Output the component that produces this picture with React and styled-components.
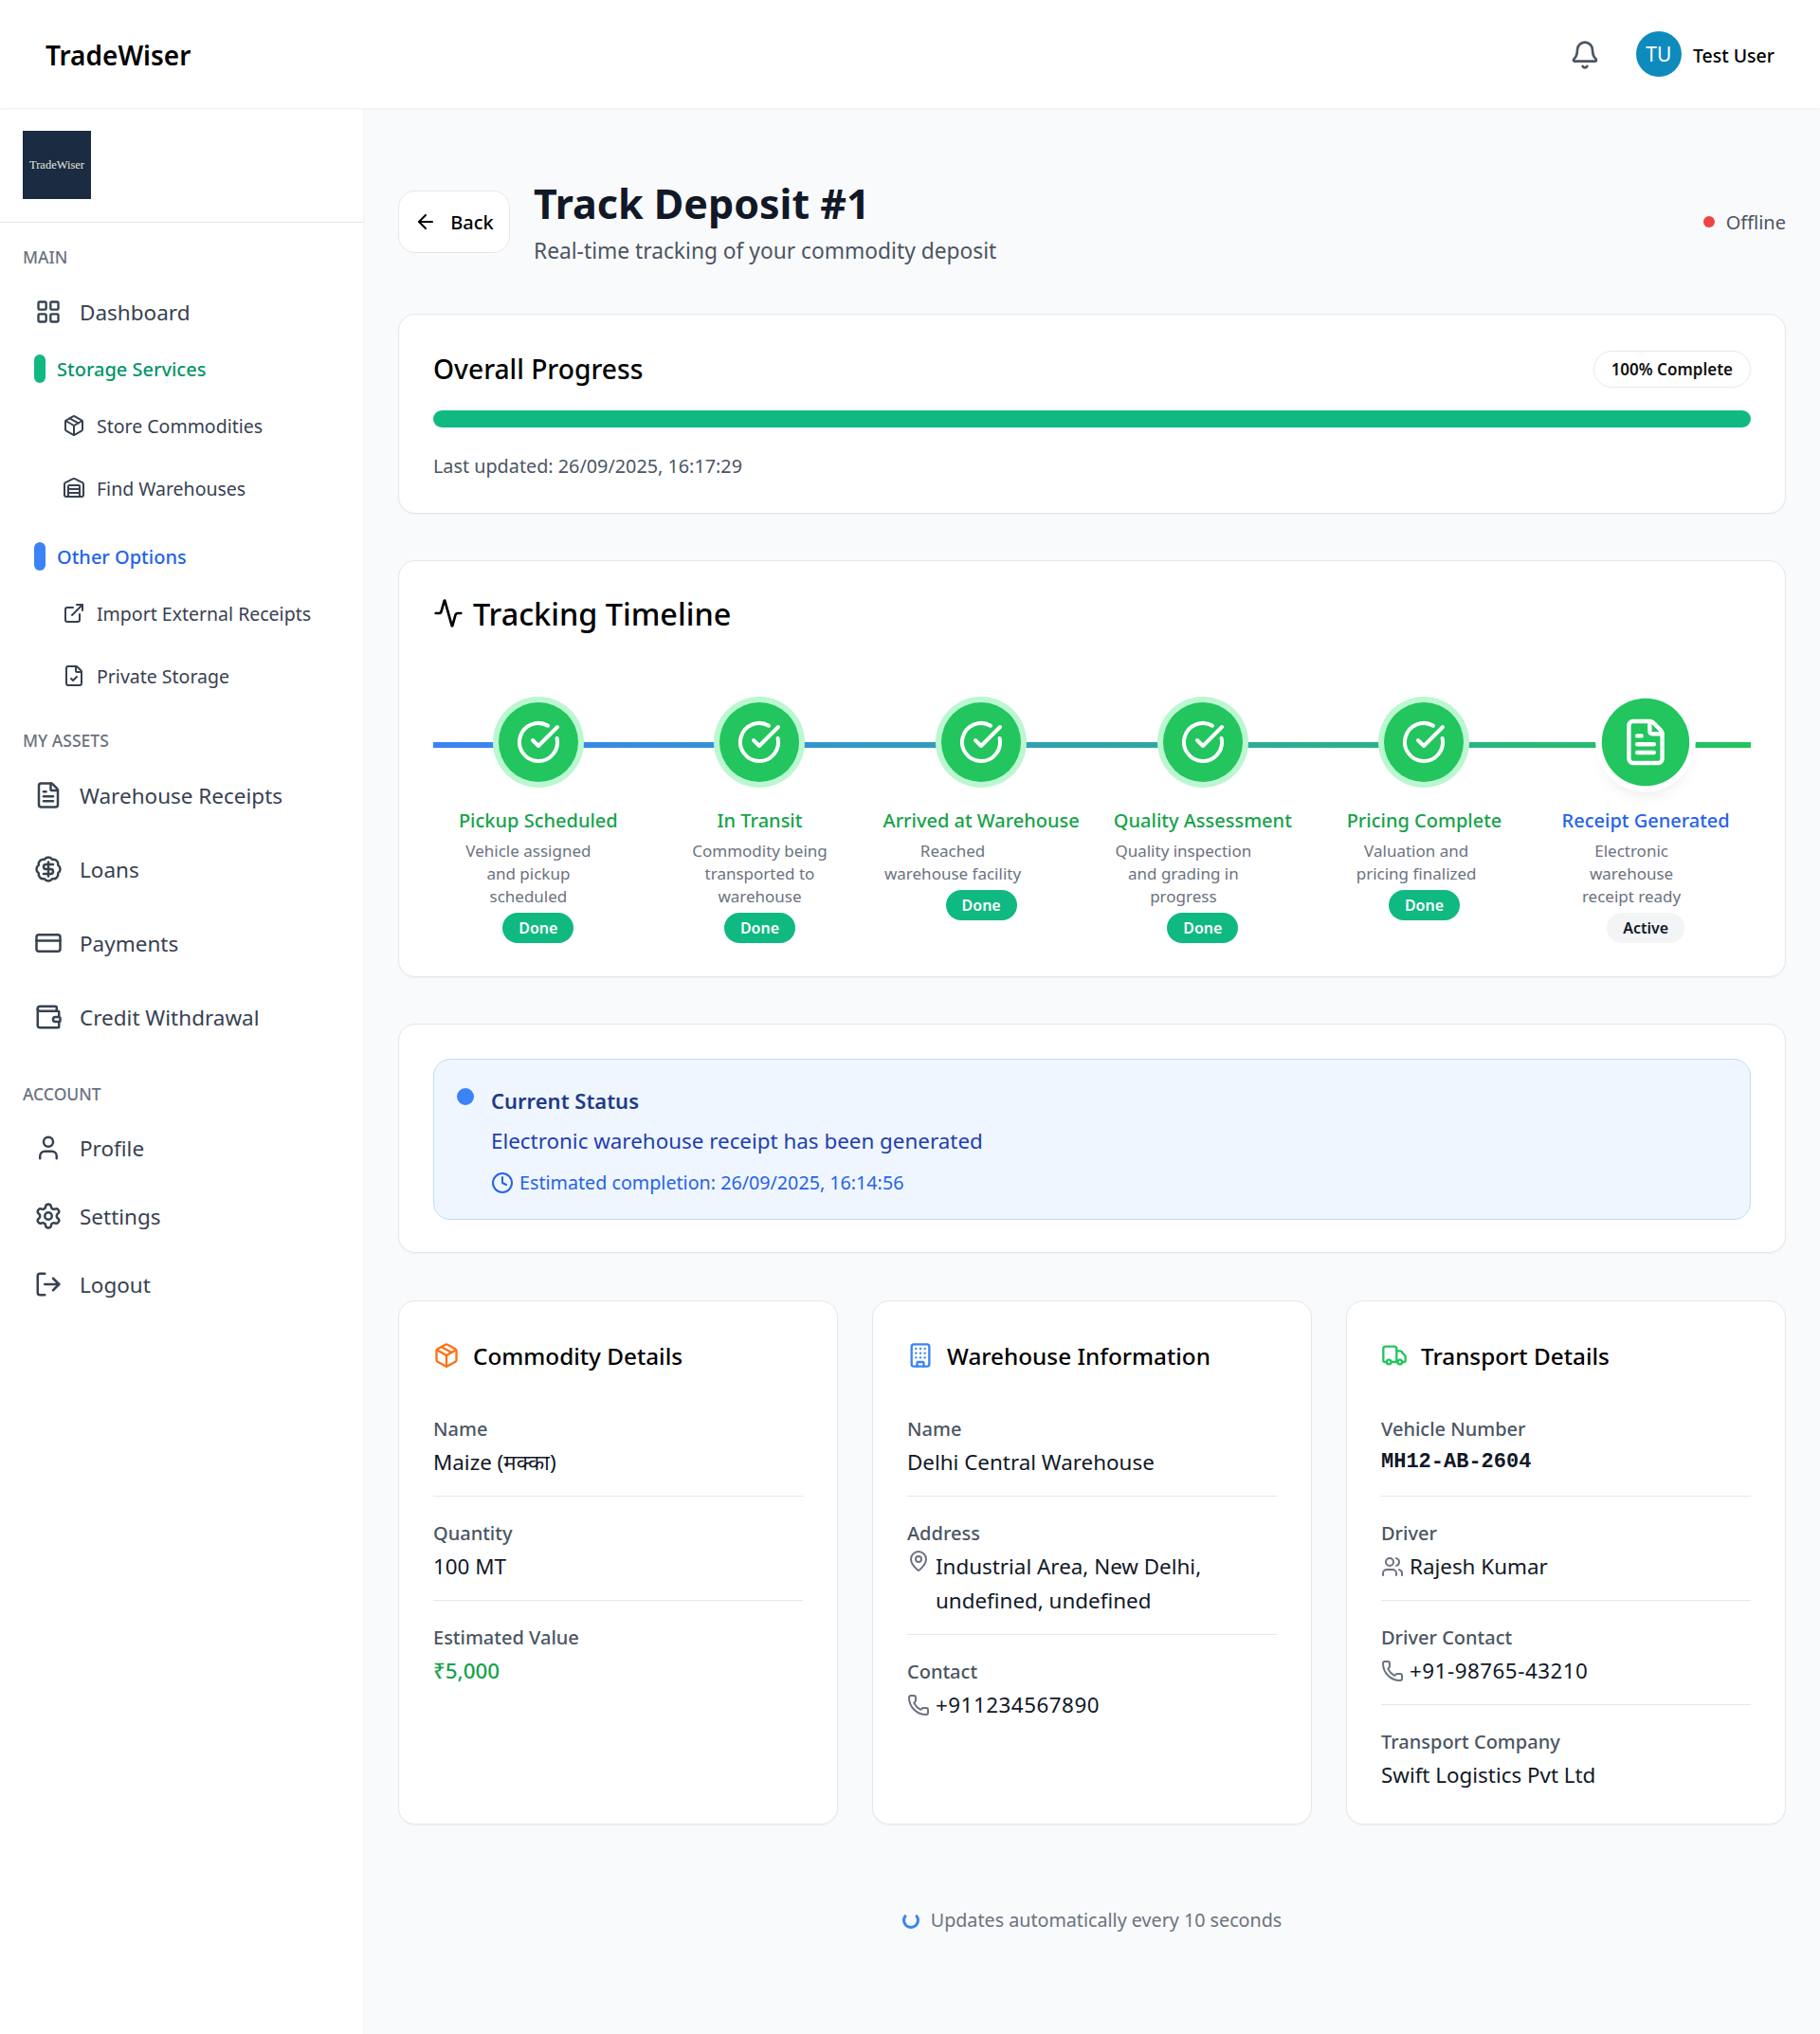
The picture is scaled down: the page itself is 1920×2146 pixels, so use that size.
import React from "react";
import styled, { createGlobalStyle } from "styled-components";
import {
  Activity, ArrowLeft, BadgeDollarSign, Bell, Building, CircleCheckBig, Clock, CreditCard, ExternalLink,
  FileCheck, FileText, LayoutGrid, LogOut, MapPin, Package, Phone, Settings, Truck, User, Users, Wallet, Warehouse,
} from "lucide-react";

const GlobalStyle = createGlobalStyle`
  * { box-sizing: border-box; }
  body {
    margin: 0;
    background: #f9fafb;
    color: #111827;
    font-family: "Noto Sans", "Open Sans", sans-serif;
  }
  svg { flex-shrink: 0; }
`;

const Page = styled.div`
  min-height: 2146px;
  display: flex;
  flex-direction: column;
`;

const TopBar = styled.header`
  height: 114px;
  flex: none;
  background: #fff;
  display: flex;
  align-items: center;
  justify-content: space-between;
  padding: 2px 48px 0;
  box-shadow: 0 1px 2px rgba(0, 0, 0, 0.06);
  position: relative;
`;

const Brand = styled.div`
  font-size: 28px;
  font-weight: 600;
  color: #000;
`;

const UserArea = styled.div`
  display: flex;
  align-items: center;
  color: #4b5563;
`;

const Avatar = styled.div`
  width: 48px;
  height: 48px;
  margin: -2px 12px 0 38px;
  border-radius: 50%;
  background: #0e8bbd;
  color: #fff;
  font-size: 21px;
  display: flex;
  align-items: center;
  justify-content: center;
`;

const UserName = styled.span`
  font-size: 19.5px;
  font-weight: 500;
  color: #000;
`;

const Body = styled.div`
  flex: 1;
  display: flex;
`;

const Sidebar = styled.aside`
  width: 384px;
  flex: none;
  background: #fff;
  border-right: 1px solid #f3f4f6;
`;

const LogoWrap = styled.div`
  padding: 24px 24px;
  height: 121px;
  border-bottom: 1px solid #e5e7eb;
`;

const LogoBox = styled.div`
  width: 72px;
  height: 72px;
  background: #1a2b42;
  color: #e9e6df;
  font-family: "Liberation Serif", serif;
  font-size: 12.5px;
  display: flex;
  align-items: center;
  justify-content: center;
`;

const Nav = styled.nav`
  padding-top: 24px;
`;

const SectionLabel = styled.div`
  height: 24px;
  line-height: 24px;
  padding-left: 24px;
  font-size: 17.5px;
  font-weight: 500;
  color: #6b7280;
  text-transform: uppercase;
  margin-top: ${(p) => p.$top || 0}px;
  margin-bottom: ${(p) => p.$bottom || 0}px;
`;

const NavRow = styled.div`
  height: ${(p) => p.$h}px;
  display: flex;
  align-items: center;
  padding-left: 36px;
  gap: 18px;
  font-size: 22.5px;
  color: #374151;
  margin-bottom: ${(p) => p.$bottom || 0}px;
`;

const IconSlot = styled.span`
  width: 30px;
  display: flex;
  justify-content: center;
  align-items: center;
  flex: none;
`;

const GroupHead = styled.div`
  height: 54px;
  display: flex;
  align-items: center;
  gap: 12px;
  padding-left: 36px;
  margin-top: ${(p) => p.$top || 0}px;
  font-size: 20px;
  font-weight: 500;
  color: ${(p) => p.$text};
`;

const GroupPill = styled.span`
  width: 12px;
  height: 30px;
  border-radius: 6px;
  background: ${(p) => p.$color};
`;

const SubRow = styled.div`
  height: 66px;
  display: flex;
  align-items: center;
  gap: 12px;
  padding-left: 66px;
  font-size: 19.5px;
  color: #374151;
`;

const Main = styled.main`
  flex: 1;
  min-width: 0;
  padding: 71px 36px 0;
`;

const PageHead = styled.div`
  display: flex;
  align-items: center;
  justify-content: space-between;
  margin-bottom: 48px;
`;

const HeadLeft = styled.div`
  display: flex;
  align-items: center;
  gap: 25px;
`;

const BackButton = styled.button`
  width: 118px;
  height: 66px;
  border: 1px solid #e5e7eb;
  border-radius: 18px;
  background: #fff;
  display: flex;
  align-items: center;
  justify-content: center;
  gap: 14px;
  font-family: inherit;
  font-size: 20px;
  font-weight: 500;
  color: #000;
  padding: 0;
`;

const Title = styled.h1`
  margin: 0;
  font-size: 43px;
  line-height: 60px;
  font-weight: 700;
  color: #111827;
`;

const Subtitle = styled.p`
  margin: 2px 0 0;
  font-size: 22.75px;
  line-height: 36px;
  color: #4b5563;
`;

const OfflineTag = styled.div`
  display: flex;
  align-items: center;
  gap: 12px;
  font-size: 20px;
  color: #4b5563;
`;

const OfflineDot = styled.span`
  width: 12px;
  height: 12px;
  border-radius: 50%;
  background: #ef4444;
`;

const Card = styled.section`
  background: #fff;
  border: 1px solid #e5e7eb;
  border-radius: 18px;
  box-shadow: 0 1px 2px rgba(0, 0, 0, 0.04);
  padding: 36px 36px ${(p) => p.$pb || 36}px;
  margin-bottom: ${(p) => p.$mb || 50}px;
`;

const ProgressHead = styled.div`
  height: 42px;
  display: flex;
  align-items: center;
  justify-content: space-between;
`;

const CardHeading = styled.h2`
  margin: 0;
  font-size: 28.2px;
  font-weight: 500;
  color: #000;
`;

const CompleteBadge = styled.span`
  height: 39px;
  padding: 0 18px;
  border: 1px solid #e5e7eb;
  border-radius: 20px;
  display: flex;
  align-items: center;
  font-size: 17px;
  font-weight: 600;
  color: #111;
`;

const ProgressTrack = styled.div`
  height: 18px;
  margin-top: 23px;
  border-radius: 9px;
  background: #10b981;
`;

const UpdatedText = styled.p`
  margin: 29px 0 0;
  font-size: 19.8px;
  line-height: 24px;
  color: #4b5563;
`;

const TimelineHeading = styled.h2`
  margin: 0 0 69px;
  height: 38px;
  display: flex;
  align-items: center;
  gap: 10px;
  font-size: 32.4px;
  font-weight: 500;
  color: #000;
`;

const Steps = styled.div`
  position: relative;
  display: grid;
  grid-template-columns: repeat(6, 1fr);
  gap: 12px;
`;

const StepLine = styled.div`
  position: absolute;
  left: 0;
  right: 0;
  top: 48px;
  height: 6px;
  background: linear-gradient(to right, #3b82f6, #22c55e);
`;

const Step = styled.div`
  position: relative;
  display: flex;
  flex-direction: column;
  align-items: center;
`;

const StepCircle = styled.div`
  width: 84px;
  height: 84px;
  margin: 6px 0;
  border-radius: 50%;
  background: #22c55e;
  color: #fff;
  display: flex;
  align-items: center;
  justify-content: center;
  box-shadow: 0 0 0 6px #bbf7d0;

  ${(p) =>
    p.$active &&
    `
    transform: scale(1.1);
    box-shadow: 0 0 0 6px #fff, 0 10px 15px -3px rgba(0, 0, 0, 0.1), 0 4px 6px -4px rgba(0, 0, 0, 0.1);
  `}
`;

const StepText = styled.div`
  margin-top: 20px;
  text-align: center;
`;

const StepTitle = styled.div`
  font-size: 20px;
  line-height: 30px;
  font-weight: 500;
  white-space: nowrap;
  color: ${(p) => (p.$active ? "#2563eb" : "#16a34a")};
`;

const StepDesc = styled.div`
  max-width: 147px;
  margin-top: 5px;
  font-size: 17px;
  line-height: 24px;
  color: #6b7280;
`;

const StepBadge = styled.span`
  height: 32px;
  margin-top: 5px;
  padding: 0 17px;
  border-radius: 16px;
  display: flex;
  align-items: center;
  font-size: 16px;
  font-weight: 600;
  background: ${(p) => (p.$active ? "#f3f4f6" : "#10b981")};
  color: ${(p) => (p.$active ? "#111827" : "#fff")};
`;

const StatusBox = styled.div`
  display: flex;
  gap: 18px;
  padding: 25px 24px 24px;
  background: #eff6ff;
  border: 1px solid #bfdbfe;
  border-radius: 18px;
`;

const StatusDot = styled.span`
  width: 18px;
  height: 18px;
  margin-top: 5px;
  border-radius: 50%;
  background: #3b82f6;
  flex: none;
`;

const StatusTitle = styled.div`
  font-size: 22px;
  line-height: 36px;
  font-weight: 600;
  color: #1e3a8a;
`;

const StatusMessage = styled.div`
  margin-top: 7px;
  font-size: 22.4px;
  line-height: 36px;
  color: #1e40af;
`;

const StatusEta = styled.div`
  margin-top: 12px;
  display: flex;
  align-items: center;
  gap: 6px;
  font-size: 19.7px;
  line-height: 28px;
  color: #2563eb;
`;

const DetailGrid = styled.div`
  display: grid;
  grid-template-columns: repeat(3, 1fr);
  gap: 36px;
`;

const DetailCard = styled(Card)`
  height: 553px;
  margin: 0;
`;

const DetailHeading = styled.h3`
  margin: 0 0 43px;
  height: 42px;
  display: flex;
  align-items: center;
  gap: 14px;
  font-size: 24.3px;
  font-weight: 500;
  color: #000;
`;

const DetailRow = styled.div`
  & + & {
    margin-top: 25px;
  }
  &:not(:last-child) {
    padding-bottom: 17px;
    border-bottom: 1px solid #e5e7eb;
  }
`;

const DetailLabel = styled.div`
  font-size: 20px;
  line-height: 28px;
  font-weight: 500;
  color: #4b5563;
`;

const DetailValue = styled.div`
  margin-top: 3px;
  display: flex;
  align-items: ${(p) => (p.$top ? "flex-start" : "center")};
  gap: 6px;
  font-size: ${(p) => (p.$mono ? 22 : 22.4)}px;
  line-height: 36px;
  letter-spacing: ${(p) => (p.$phone ? "0.5px" : "normal")};
  color: ${(p) => p.$color || "#111827"};
  font-weight: ${(p) => p.$weight || 400};
  font-family: ${(p) => (p.$mono ? '"Liberation Mono", monospace' : "inherit")};
`;

const FootNote = styled.div`
  margin-top: 87px;
  display: flex;
  align-items: center;
  justify-content: center;
  gap: 12px;
  font-size: 19.7px;
  line-height: 28px;
  color: #6b7280;
`;

const Spinner = styled.span`
  width: 18px;
  height: 18px;
  border-radius: 50%;
  border: 3px solid #3b82f6;
  border-top-color: transparent;
`;

const steps = [
  { title: "Pickup Scheduled", desc: "Vehicle assigned and pickup scheduled" },
  { title: "In Transit", desc: "Commodity being transported to warehouse" },
  { title: "Arrived at Warehouse", desc: "Reached warehouse facility" },
  { title: "Quality Assessment", desc: "Quality inspection and grading in progress" },
  { title: "Pricing Complete", desc: "Valuation and pricing finalized" },
  { title: "Receipt Generated", desc: "Electronic warehouse receipt ready", active: true },
];

const storage = [
  { icon: Package, label: "Store Commodities" },
  { icon: Warehouse, label: "Find Warehouses" },
];

const other = [
  { icon: ExternalLink, label: "Import External Receipts" },
  { icon: FileCheck, label: "Private Storage" },
];

const assets = [
  { icon: FileText, label: "Warehouse Receipts" },
  { icon: BadgeDollarSign, label: "Loans" },
  { icon: CreditCard, label: "Payments" },
  { icon: Wallet, label: "Credit Withdrawal" },
];

const account = [
  { icon: User, label: "Profile" },
  { icon: Settings, label: "Settings" },
  { icon: LogOut, label: "Logout" },
];

export default function App() {
  return (
    <Page>
      <GlobalStyle />
      <TopBar>
        <Brand>TradeWiser</Brand>
        <UserArea>
          <Bell size={32} />
          <Avatar>TU</Avatar>
          <UserName>Test User</UserName>
        </UserArea>
      </TopBar>
      <Body>
        <Sidebar>
          <LogoWrap>
            <LogoBox>TradeWiser</LogoBox>
          </LogoWrap>
          <Nav>
            <SectionLabel $bottom={16}>Main</SectionLabel>
            <NavRow $h={60} $bottom={3}>
              <IconSlot><LayoutGrid size={28} /></IconSlot>
              Dashboard
            </NavRow>
            <GroupHead $text="#059669">
              <GroupPill $color="#10b981" />
              Storage Services
            </GroupHead>
            {storage.map((item) => (
              <SubRow key={item.label}><item.icon size={24} />{item.label}</SubRow>
            ))}
            <GroupHead $text="#2563eb" $top={12}>
              <GroupPill $color="#3b82f6" />
              Other Options
            </GroupHead>
            {other.map((item) => (
              <SubRow key={item.label}><item.icon size={24} />{item.label}</SubRow>
            ))}

            <SectionLabel $top={23} $bottom={7}>My Assets</SectionLabel>
            {assets.map((item) => (
              <NavRow $h={78} key={item.label}>
                <IconSlot><item.icon size={30} /></IconSlot>
                {item.label}
              </NavRow>
            ))}

            <SectionLabel $top={30} $bottom={9}>Account</SectionLabel>
            {account.map((item) => (
              <NavRow $h={72} key={item.label}>
                <IconSlot><item.icon size={30} /></IconSlot>
                {item.label}
              </NavRow>
            ))}
          </Nav>
        </Sidebar>

        <Main>
          <PageHead>
            <HeadLeft>
              <BackButton><ArrowLeft size={24} />Back</BackButton>
              <div>
                <Title>Track Deposit #1</Title>
                <Subtitle>Real-time tracking of your commodity deposit</Subtitle>
              </div>
            </HeadLeft>
            <OfflineTag><OfflineDot />Offline</OfflineTag>
          </PageHead>

          <Card $pb={37} $mb={49}>
            <ProgressHead>
              <CardHeading>Overall Progress</CardHeading>
              <CompleteBadge>100% Complete</CompleteBadge>
            </ProgressHead>
            <ProgressTrack />
            <UpdatedText>Last updated: 26/09/2025, 16:17:29</UpdatedText>
          </Card>

          <Card $pb={35} $mb={49}>
            <TimelineHeading><Activity size={32} />Tracking Timeline</TimelineHeading>
            <Steps>
              <StepLine />
              {steps.map((s) => (
                <Step key={s.title}>
                  <StepCircle $active={s.active}>
                    {s.active ? <FileText size={48} /> : <CircleCheckBig size={48} />}
                  </StepCircle>
                  <StepText>
                    <StepTitle $active={s.active}>{s.title}</StepTitle>
                    <StepDesc>{s.desc}</StepDesc>
                  </StepText>
                  <StepBadge $active={s.active}>{s.active ? "Active" : "Done"}</StepBadge>
                </Step>
              ))}
            </Steps>
          </Card>

          <Card $pb={34}>
            <StatusBox>
              <StatusDot />
              <div>
                <StatusTitle>Current Status</StatusTitle>
                <StatusMessage>Electronic warehouse receipt has been generated</StatusMessage>
                <StatusEta><Clock size={24} />Estimated completion: 26/09/2025, 16:14:56</StatusEta>
              </div>
            </StatusBox>
          </Card>

          <DetailGrid>
            <DetailCard>
              <DetailHeading><Package size={28} color="#f97316" />Commodity Details</DetailHeading>
              <DetailRow>
                <DetailLabel>Name</DetailLabel>
                <DetailValue>Maize (मक्का)</DetailValue>
              </DetailRow>
              <DetailRow>
                <DetailLabel>Quantity</DetailLabel>
                <DetailValue>100 MT</DetailValue>
              </DetailRow>
              <DetailRow>
                <DetailLabel>Estimated Value</DetailLabel>
                <DetailValue $color="#16a34a" $weight={500}>₹5,000</DetailValue>
              </DetailRow>
            </DetailCard>

            <DetailCard>
              <DetailHeading><Building size={28} color="#3b82f6" />Warehouse Information</DetailHeading>
              <DetailRow>
                <DetailLabel>Name</DetailLabel>
                <DetailValue>Delhi Central Warehouse</DetailValue>
              </DetailRow>
              <DetailRow>
                <DetailLabel>Address</DetailLabel>
                <DetailValue $top>
                  <MapPin size={24} color="#6b7280" />
                  <span>Industrial Area, New Delhi, undefined, undefined</span>
                </DetailValue>
              </DetailRow>
              <DetailRow>
                <DetailLabel>Contact</DetailLabel>
                <DetailValue $phone><Phone size={24} color="#6b7280" />+911234567890</DetailValue>
              </DetailRow>
            </DetailCard>

            <DetailCard>
              <DetailHeading><Truck size={28} color="#22c55e" />Transport Details</DetailHeading>
              <DetailRow>
                <DetailLabel>Vehicle Number</DetailLabel>
                <DetailValue $mono $weight={700}>MH12-AB-2604</DetailValue>
              </DetailRow>
              <DetailRow>
                <DetailLabel>Driver</DetailLabel>
                <DetailValue><Users size={24} color="#6b7280" />Rajesh Kumar</DetailValue>
              </DetailRow>
              <DetailRow>
                <DetailLabel>Driver Contact</DetailLabel>
                <DetailValue $phone><Phone size={24} color="#6b7280" />+91-98765-43210</DetailValue>
              </DetailRow>
              <DetailRow>
                <DetailLabel>Transport Company</DetailLabel>
                <DetailValue>Swift Logistics Pvt Ltd</DetailValue>
              </DetailRow>
            </DetailCard>
          </DetailGrid>

          <FootNote><Spinner />Updates automatically every 10 seconds</FootNote>
        </Main>
      </Body>
    </Page>
  );
}
